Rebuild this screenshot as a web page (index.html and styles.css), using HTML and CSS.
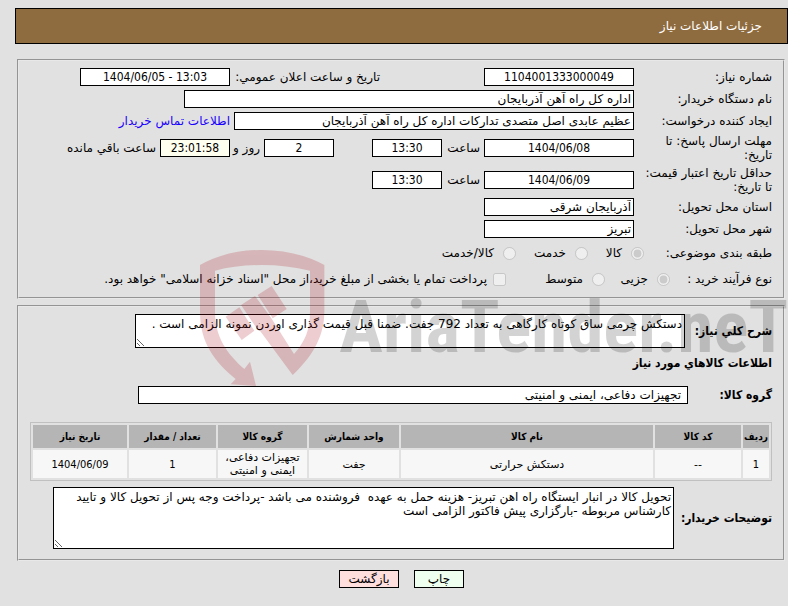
FILE: index.html
```
<!DOCTYPE html>
<html lang="fa" dir="rtl">
<head>
  <meta charset="UTF-8" />
  <title>جزئیات اطلاعات نیاز</title>
  <link rel="stylesheet" href="styles.css">
</head>
<body>
  <div class="page">
    <h1 class="title-bar">جزئیات اطلاعات نیاز</h1>

    <!-- Need details -->
    <fieldset class="panel">
      <div class="row">
        <label class="caption" for="needNo">شماره نیاز:</label>
        <input id="needNo" class="field date" value="1104001333000049" readonly>
        <label class="announce" for="announceDate">تاریخ و ساعت اعلان عمومي:</label>
        <input id="announceDate" class="field date" dir="ltr" value="1404/06/05 - 13:03" readonly>
      </div>
      <div class="row">
        <label class="caption" for="buyer">نام دستگاه خریدار:</label>
        <input id="buyer" class="field wide" value="اداره کل راه آهن آذربایجان" readonly>
      </div>
      <div class="row">
        <label class="caption" for="creator">ایجاد کننده درخواست:</label>
        <input id="creator" class="field medium" value="عظیم عابدی اصل متصدی تدارکات اداره کل راه آهن آذربایجان" readonly>
        <a class="contact" href="#contact">اطلاعات تماس خریدار</a>
      </div>
      <div class="row tall">
        <label class="caption" for="replyDate">مهلت ارسال پاسخ: تا<br>تاریخ:</label>
        <input id="replyDate" class="field date" value="1404/06/08" readonly>
        <label class="hour" for="replyHour">ساعت</label>
        <input id="replyHour" class="field short" value="13:30" readonly>
        <input id="daysLeft" class="field short days" value="2" readonly>
        <label class="day" for="daysLeft">روز و</label>
        <input id="timeLeft" class="field short timer" value="23:01:58" readonly>
        <label class="left" for="timeLeft">ساعت باقي مانده</label>
      </div>
      <div class="row tall">
        <label class="caption" for="priceDate">حداقل تاریخ اعتبار قیمت:<br>تا تاریخ:</label>
        <input id="priceDate" class="field date" value="1404/06/09" readonly>
        <label class="hour" for="priceHour">ساعت</label>
        <input id="priceHour" class="field short" value="13:30" readonly>
      </div>
      <div class="row">
        <label class="caption" for="province">استان محل تحویل:</label>
        <input id="province" class="field place" value="آذربایجان شرقی" readonly>
      </div>
      <div class="row">
        <label class="caption" for="city">شهر محل تحویل:</label>
        <input id="city" class="field place" value="تبریز" readonly>
      </div>
      <div class="row choices">
        <span class="caption subject">طبقه بندی موضوعی:</span>
        <input type="radio" name="subject" id="goods" checked disabled>
        <label class="opt goods" for="goods">کالا</label>
        <input type="radio" name="subject" id="service" disabled>
        <label class="opt service" for="service">خدمت</label>
        <input type="radio" name="subject" id="both" disabled>
        <label class="opt" for="both">کالا/خدمت</label>
      </div>
      <div class="row choices">
        <span class="caption process">نوع فرآیند خرید :</span>
        <input type="radio" name="process" id="small" checked disabled>
        <label class="opt small" for="small">جزیی</label>
        <input type="radio" name="process" id="mid" disabled>
        <label class="opt mid" for="mid">متوسط</label>
        <input type="checkbox" id="treasury" disabled>
        <label class="opt treasury" for="treasury">پرداخت تمام یا بخشی از مبلغ خرید،از محل "اسناد خزانه اسلامی" خواهد بود.</label>
      </div>
    </fieldset>

    <!-- Goods -->
    <fieldset class="panel goods-panel">
      <div class="block">
        <label class="bold desc-label" for="desc">شرح کلي نیاز:</label>
        <textarea id="desc" class="field desc" readonly>دستکش چرمی ساق کوتاه کارگاهی به تعداد 792 جفت. ضمنا قبل قیمت گذاری اوردن نمونه الزامی است .</textarea>
      </div>
      <h2 class="bold heading">اطلاعات کالاهاي مورد نیاز</h2>
      <div class="block">
        <label class="bold group-label" for="group">گروه کالا:</label>
        <input id="group" class="field group" value="تجهیزات دفاعی، ایمنی و امنیتی" readonly>
      </div>

      <table class="items">
        <colgroup>
          <col class="c-row"><col class="c-code"><col class="c-name"><col class="c-unit"><col class="c-group"><col class="c-count"><col class="c-date">
        </colgroup>
        <thead>
          <tr>
            <th>ردیف</th>
            <th>کد کالا</th>
            <th>نام کالا</th>
            <th>واحد شمارش</th>
            <th>گروه کالا</th>
            <th>تعداد / مقدار</th>
            <th>تاریخ نیاز</th>
          </tr>
        </thead>
        <tbody>
          <tr>
            <td class="num">1</td>
            <td>--</td>
            <td>دستکش حرارتی</td>
            <td>جفت</td>
            <td>تجهیزات دفاعی، ایمنی و امنیتی</td>
            <td class="num">1</td>
            <td class="num">1404/06/09</td>
          </tr>
        </tbody>
      </table>

      <div class="block">
        <label class="bold notes-label" for="notes">توضیحات خریدار:</label>
        <textarea id="notes" class="field notes" readonly>تحویل کالا در انبار ایستگاه راه اهن تبریز- هزینه حمل به عهده  فروشنده می باشد -پرداخت وجه پس از تحویل کالا و تایید کارشناس مربوطه -بارگزاری پیش فاکتور الزامی است</textarea>
      </div>
    </fieldset>

    <div class="actions">
      <button type="button" class="btn print">چاپ</button>
      <button type="button" class="btn back">بازگشت</button>
    </div>
  </div>

  <!-- Watermark over the form -->
  <svg class="watermark" width="598" height="150" viewBox="0 0 1794 450" aria-hidden="true">
    <g class="shield">
      <path d="M30 75 Q110 30 215 30 T403 75 V215 C403 300 355 360 308 405 L206 267 L198 262 L153 195 L195 168 L242 232 L312 342 C345 305 360 270 360 215 V92 Q290 75 215 75 T75 92 V215 C75 290 110 340 163 387 L180 365 L198 438 L122 433 L137 417 C75 365 30 310 30 215 Z"/>
      <path d="M107 230 L148 202 L193 272 L155 300 Z"/>
      <path d="M203 165 L245 138 L290 207 L248 235 Z"/>
    </g>
    <text class="brand" x="448" y="336">AriaTender.neT</text>
  </svg>
</body>
</html>
```
FILE: styles.css
```
body {
  margin: 0;
  background: #e1e1e1;
  color: #000;
  font-family: "DejaVu Sans", sans-serif;
  font-size: 12px;
  line-height: 14px;
  position: relative;
  overflow-x: hidden;
}

.page {
  padding: 8px 0 0 15px;
}

.title-bar {
  margin: 0 0 15px;
  padding: 10px 25px 10px 0;
  border: 1px solid #000;
  background: #8f6c40;
  color: #fff;
  font-size: 12px;
  font-weight: normal;
  line-height: 14px;
}

.panel {
  margin: 0 3px 6px 2px;
  padding: 5px 11px;
  min-width: 0;
  border: 2px groove #e8e8e8;
}

.row {
  display: flex;
  align-items: center;
  height: 22px;
  white-space: nowrap;
}

.row.tall {
  height: 32px;
}

.row.choices {
  height: 26px;
}

.caption {
  flex: none;
  width: 138px;
}

.field {
  box-sizing: border-box;
  flex: none;
  height: 18px;
  margin: 0;
  padding: 0 2px;
  border: 1px solid #000;
  border-radius: 0;
  background: #fff;
  color: #000;
  font: inherit;
}

.date,
.place {
  width: 150px;
}

.date,
.short {
  font-family: "DejaVu Sans Condensed", "DejaVu Sans", sans-serif;
  text-align: center;
}

.short {
  width: 70px;
}

.medium {
  width: 400px;
}

.wide {
  width: 450px;
}

.announce {
  width: 150px;
  margin-right: 104px;
}

.contact {
  margin-right: 4px;
  color: #1a00ff;
  text-decoration: none;
}

.hour {
  width: 38px;
  margin-right: 4px;
}

.days {
  margin-right: 38px;
}

.day {
  width: 30px;
  margin-right: 4px;
}

.timer {
  background: #fffff0;
}

.left {
  margin-right: 4px;
}

/* radios and tick box */
.choices input {
  flex: none;
  width: 13px;
  height: 13px;
  margin: 0 0 0 9px;
}

.choices input[type="checkbox"] {
  margin-left: 6px;
}

.subject {
  width: 128px;
}

.process {
  width: 102px;
}

.opt.goods {
  width: 34px;
}

.opt.service {
  width: 50px;
}

.opt.small {
  width: 43px;
}

.opt.mid {
  width: 77px;
}

/* goods panel */
.goods-panel {
  padding-top: 7px;
  padding-bottom: 10px;
}

.bold {
  font-family: "DejaVu Sans Condensed", "DejaVu Sans", sans-serif;
  font-size: 12px;
  font-weight: bold;
}

.block {
  display: flex;
  align-items: center;
  white-space: nowrap;
}

.desc-label {
  width: 87px;
}

.group-label {
  width: 84px;
}

.notes-label {
  width: 98px;
}

.desc {
  flex: 1;
  height: 34px;
  margin-left: 105px;
}

.group {
  flex: 1;
  margin-left: 108px;
  padding: 0 6px;
}

.notes {
  flex: 1;
  height: 62px;
  margin-left: 23px;
}

textarea.field {
  padding: 2px;
  white-space: pre-wrap;
}

.heading {
  margin: 8px 0 16px;
}

.items {
  width: 100%;
  margin: 18px 0 6px;
  border: 1px solid #c0c0c0;
  border-spacing: 2px;
  table-layout: fixed;
  font-size: 11px;
  line-height: 13px;
  text-align: center;
}

.items th {
  height: 23px;
  padding: 0;
  background: #b5b5b5;
  font-family: "DejaVu Sans Condensed", "DejaVu Sans", sans-serif;
  font-size: 10px;
}

.items td {
  height: 28px;
  padding: 0;
  background: #f7f7f7;
}

.items .num {
  font-family: "DejaVu Sans Condensed", "DejaVu Sans", sans-serif;
}

.c-row {
  width: 26px;
}

.c-code {
  width: 86px;
}

.c-unit {
  width: 90px;
}

.c-group {
  width: 89px;
}

.c-count {
  width: 87px;
}

.c-date {
  width: 94px;
}

.actions {
  display: flex;
  justify-content: center;
  gap: 15px;
  margin-top: 9px;
}

.btn {
  width: 60px;
  height: 18px;
  padding: 0;
  border: 1px solid #000;
  font: inherit;
}

.print {
  width: 50px;
  background: #efffef;
}

.back {
  background: #ffdede;
}

.watermark {
  position: absolute;
  top: 240px;
  right: 0;
  direction: ltr;
  pointer-events: none;
}

.shield {
  fill: #a80a14;
  opacity: 0.2;
}

.brand {
  fill: #000;
  opacity: 0.17;
  font-family: "Roboto Condensed", Roboto, sans-serif;
  font-size: 219px;
  font-weight: bold;
}
```
